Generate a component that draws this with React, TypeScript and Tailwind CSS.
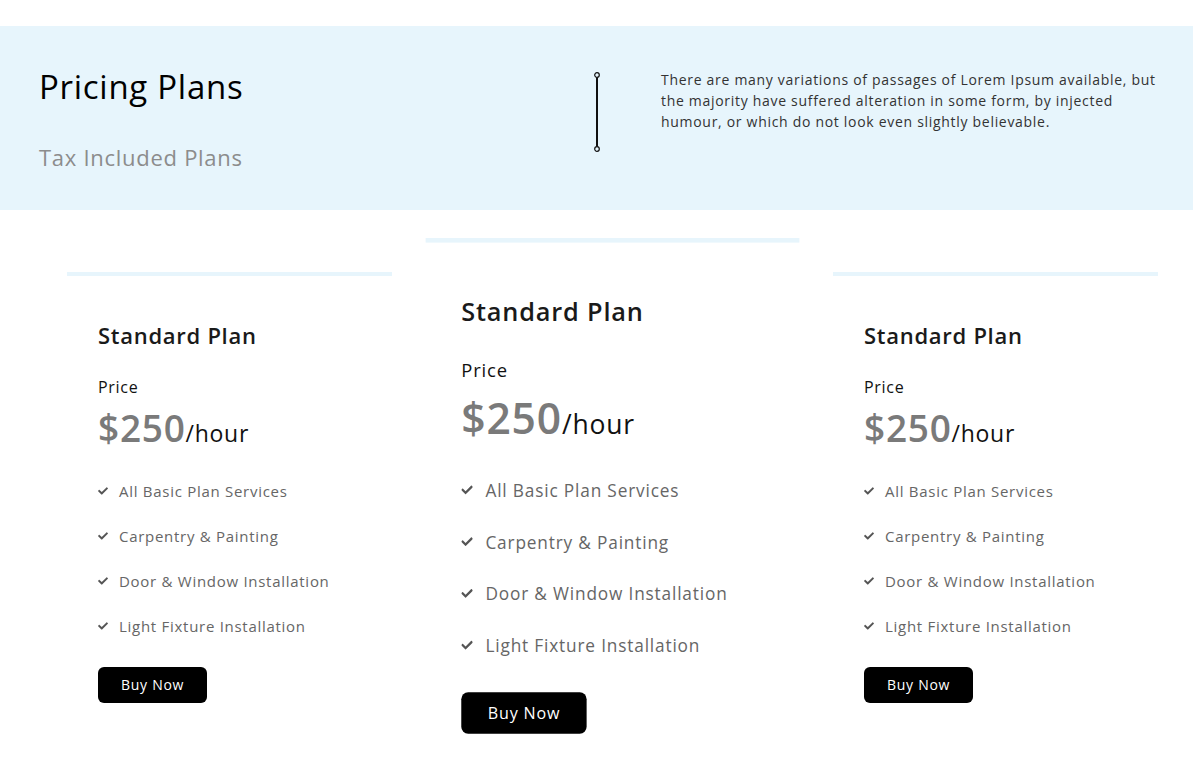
const features = [
  "All Basic Plan Services",
  "Carpentry & Painting",
  "Door & Window Installation",
  "Light Fixture Installation",
];

function CheckIcon() {
  return (
    <svg viewBox="0 0 512 512" className="w-[10px] h-[10px] shrink-0 fill-[#555]">
      <path d="M173.9 439.4l-166.4-166.4c-10-10-10-26.2 0-36.2l36.2-36.2c10-10 26.2-10 36.2 0L192 312.7 432.1 72.6c10-10 26.2-10 36.2 0l36.2 36.2c10 10 10 26.2 0 36.2L210.1 439.4c-10 10-26.2 10-36.2 0z" />
    </svg>
  );
}

function PlanCard({ featured = false }: { featured?: boolean }) {
  return (
    <div
      className={
        "w-[325px] h-[453px] bg-white border-t-4 border-[#e7f5fc] pl-[31px] pt-[44px] " +
        (featured ? "scale-115 relative z-10" : "")
      }
    >
      <h3 className="text-[22px] leading-[30px] font-semibold text-[#1a1a1a]">Standard Plan</h3>
      <div className="mt-[26px] text-[16px] leading-[22px] font-medium text-[#111]">Price</div>
      <div className="mt-[8px] flex items-baseline">
        <span className="text-[37px] leading-[44px] font-semibold text-[#7a7a7a]">$250</span>
        <span className="text-[23px] font-medium text-[#111]">/hour</span>
      </div>
      <ul className="mt-[29px] flex flex-col gap-[23px]">
        {features.map((f) => (
          <li key={f} className="flex items-center gap-[11px] text-[15px] leading-[22px] text-[#666]">
            <CheckIcon />
            <span>{f}</span>
          </li>
        ))}
      </ul>
      <button className="mt-[30px] h-[36px] px-[23px] rounded-[6px] bg-black text-white text-[14px]">
        Buy Now
      </button>
    </div>
  );
}

export default function App() {
  return (
    <div className="min-h-[762px] bg-white pt-[26px] font-['Open_Sans',sans-serif] tracking-[0.045em]">
      <section className="h-[184px] bg-[#e7f5fc] flex pl-[39px] pr-[33px]">
        <div className="w-[554px] shrink-0 pt-[41px]">
          <h1 className="text-[33px] leading-[40px] font-medium text-black">Pricing Plans</h1>
          <p className="mt-[36px] text-[22px] leading-[28px] text-[#8c8c8c]">Tax Included Plans</p>
        </div>
        <div className="pt-[46px]">
          <svg width="8" height="80" viewBox="0 0 8 80" className="block">
            <circle cx="4" cy="3" r="2.3" fill="none" stroke="#111" strokeWidth="1.2" />
            <line x1="4" y1="5.5" x2="4" y2="74.5" stroke="#111" strokeWidth="2" />
            <circle cx="4" cy="77" r="2.3" fill="none" stroke="#111" strokeWidth="1.2" />
          </svg>
        </div>
        <p className="ml-[60px] pt-[43px] text-[14px] leading-[21px] tracking-[0.05em] text-[#333]">
          There are many variations of passages of Lorem Ipsum available, but the majority have
          suffered alteration in some form, by injected humour, or which do not look even slightly
          believable.
        </p>
      </section>
      <section className="flex gap-[58px] pt-[62px] pl-[67px]">
        <PlanCard />
        <PlanCard featured />
        <PlanCard />
      </section>
    </div>
  );
}
